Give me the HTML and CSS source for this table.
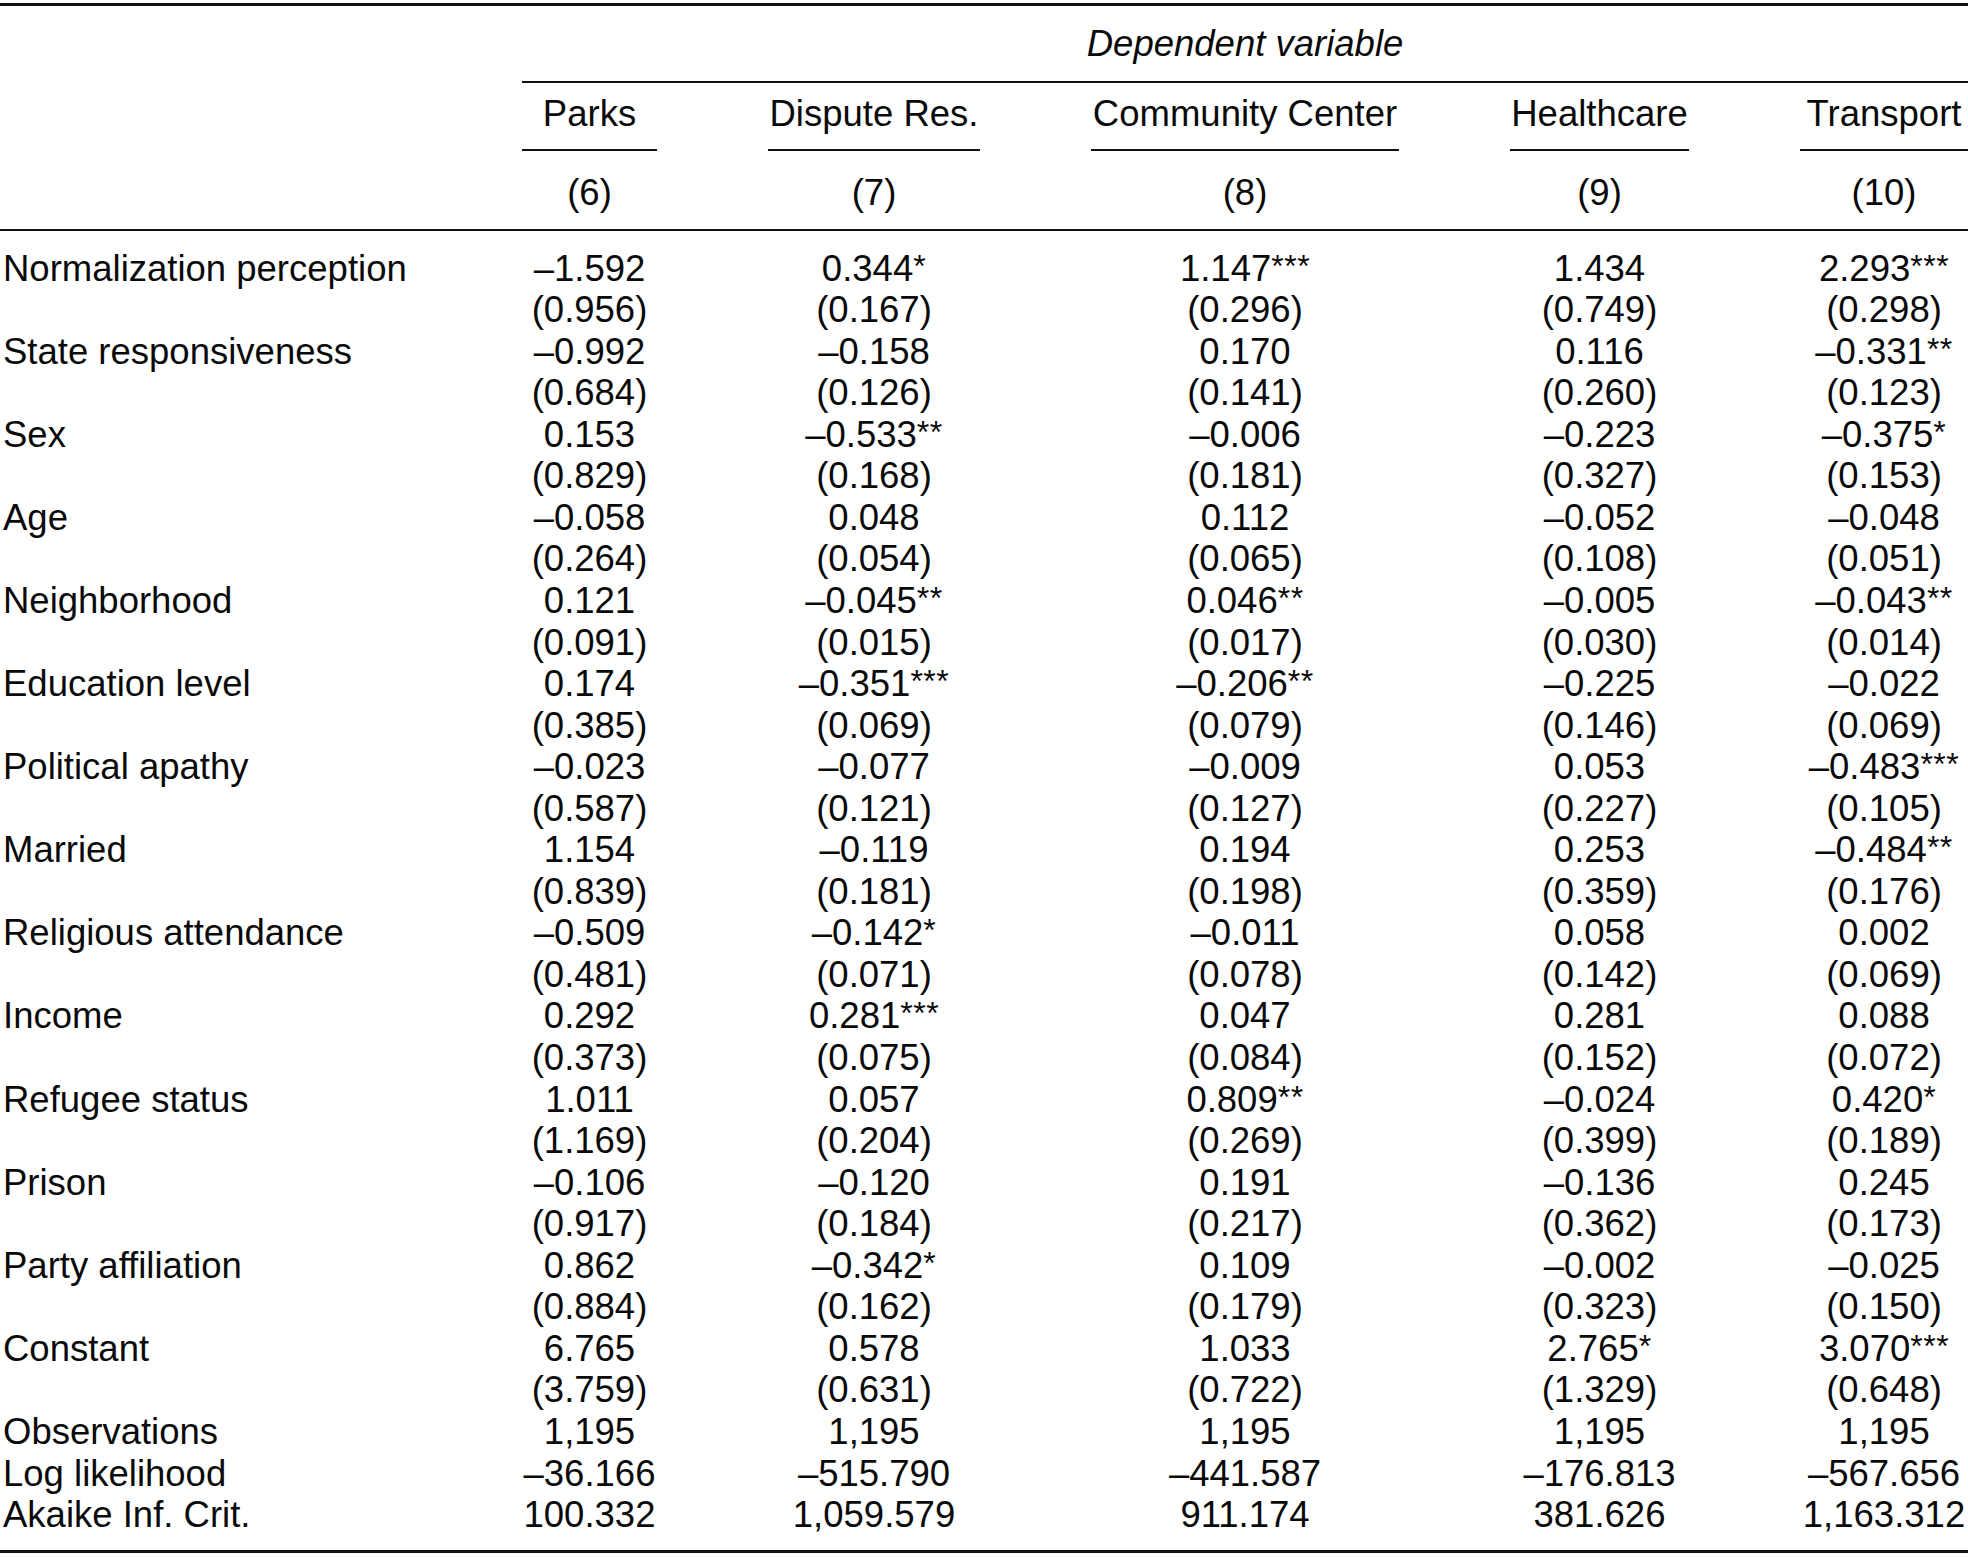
FILE: index.html
```html
<!DOCTYPE html>
<html lang="en">
<head>
<meta charset="utf-8">
<title>Regression table</title>
<link rel="stylesheet" href="styles.css">
</head>
<body>
<table class="reg">
  <colgroup>
    <col class="c-label">
    <col class="c-parks">
    <col class="c-dispute">
    <col class="c-cc">
    <col class="c-health">
    <col class="c-trans">
  </colgroup>
  <thead>
    <tr class="row-dep">
      <th class="lab"></th>
      <th class="dep" colspan="5"><div class="dep-in">Dependent variable</div></th>
    </tr>
    <tr class="row-names">
      <th class="lab"></th>
      <th class="num"><div class="uline">Parks</div></th>
      <th class="num"><div class="uline">Dispute Res.</div></th>
      <th class="num"><div class="uline">Community Center</div></th>
      <th class="num"><div class="uline">Healthcare</div></th>
      <th class="num last"><div class="uline">Transport</div></th>
    </tr>
    <tr class="row-idx">
      <th class="lab"></th>
      <th class="num">(6)</th>
      <th class="num">(7)</th>
      <th class="num">(8)</th>
      <th class="num">(9)</th>
      <th class="num last">(10)</th>
    </tr>
  </thead>
  <tbody>
    <tr class="first"><td class="lab">Normalization perception</td><td class="num">–1.592</td><td class="num">0.344<span class="st">*</span></td><td class="num">1.147<span class="st">***</span></td><td class="num">1.434</td><td class="num last">2.293<span class="st">***</span></td></tr>
    <tr><td class="lab"></td><td class="num">(0.956)</td><td class="num">(0.167)</td><td class="num">(0.296)</td><td class="num">(0.749)</td><td class="num last">(0.298)</td></tr>
    <tr><td class="lab">State responsiveness</td><td class="num">–0.992</td><td class="num">–0.158</td><td class="num">0.170</td><td class="num">0.116</td><td class="num last">–0.331<span class="st">**</span></td></tr>
    <tr><td class="lab"></td><td class="num">(0.684)</td><td class="num">(0.126)</td><td class="num">(0.141)</td><td class="num">(0.260)</td><td class="num last">(0.123)</td></tr>
    <tr><td class="lab">Sex</td><td class="num">0.153</td><td class="num">–0.533<span class="st">**</span></td><td class="num">–0.006</td><td class="num">–0.223</td><td class="num last">–0.375<span class="st">*</span></td></tr>
    <tr><td class="lab"></td><td class="num">(0.829)</td><td class="num">(0.168)</td><td class="num">(0.181)</td><td class="num">(0.327)</td><td class="num last">(0.153)</td></tr>
    <tr><td class="lab">Age</td><td class="num">–0.058</td><td class="num">0.048</td><td class="num">0.112</td><td class="num">–0.052</td><td class="num last">–0.048</td></tr>
    <tr><td class="lab"></td><td class="num">(0.264)</td><td class="num">(0.054)</td><td class="num">(0.065)</td><td class="num">(0.108)</td><td class="num last">(0.051)</td></tr>
    <tr><td class="lab">Neighborhood</td><td class="num">0.121</td><td class="num">–0.045<span class="st">**</span></td><td class="num">0.046<span class="st">**</span></td><td class="num">–0.005</td><td class="num last">–0.043<span class="st">**</span></td></tr>
    <tr><td class="lab"></td><td class="num">(0.091)</td><td class="num">(0.015)</td><td class="num">(0.017)</td><td class="num">(0.030)</td><td class="num last">(0.014)</td></tr>
    <tr><td class="lab">Education level</td><td class="num">0.174</td><td class="num">–0.351<span class="st">***</span></td><td class="num">–0.206<span class="st">**</span></td><td class="num">–0.225</td><td class="num last">–0.022</td></tr>
    <tr><td class="lab"></td><td class="num">(0.385)</td><td class="num">(0.069)</td><td class="num">(0.079)</td><td class="num">(0.146)</td><td class="num last">(0.069)</td></tr>
    <tr><td class="lab">Political apathy</td><td class="num">–0.023</td><td class="num">–0.077</td><td class="num">–0.009</td><td class="num">0.053</td><td class="num last">–0.483<span class="st">***</span></td></tr>
    <tr><td class="lab"></td><td class="num">(0.587)</td><td class="num">(0.121)</td><td class="num">(0.127)</td><td class="num">(0.227)</td><td class="num last">(0.105)</td></tr>
    <tr><td class="lab">Married</td><td class="num">1.154</td><td class="num">–0.119</td><td class="num">0.194</td><td class="num">0.253</td><td class="num last">–0.484<span class="st">**</span></td></tr>
    <tr><td class="lab"></td><td class="num">(0.839)</td><td class="num">(0.181)</td><td class="num">(0.198)</td><td class="num">(0.359)</td><td class="num last">(0.176)</td></tr>
    <tr><td class="lab">Religious attendance</td><td class="num">–0.509</td><td class="num">–0.142<span class="st">*</span></td><td class="num">–0.011</td><td class="num">0.058</td><td class="num last">0.002</td></tr>
    <tr><td class="lab"></td><td class="num">(0.481)</td><td class="num">(0.071)</td><td class="num">(0.078)</td><td class="num">(0.142)</td><td class="num last">(0.069)</td></tr>
    <tr><td class="lab">Income</td><td class="num">0.292</td><td class="num">0.281<span class="st">***</span></td><td class="num">0.047</td><td class="num">0.281</td><td class="num last">0.088</td></tr>
    <tr><td class="lab"></td><td class="num">(0.373)</td><td class="num">(0.075)</td><td class="num">(0.084)</td><td class="num">(0.152)</td><td class="num last">(0.072)</td></tr>
    <tr><td class="lab">Refugee status</td><td class="num">1.011</td><td class="num">0.057</td><td class="num">0.809<span class="st">**</span></td><td class="num">–0.024</td><td class="num last">0.420<span class="st">*</span></td></tr>
    <tr><td class="lab"></td><td class="num">(1.169)</td><td class="num">(0.204)</td><td class="num">(0.269)</td><td class="num">(0.399)</td><td class="num last">(0.189)</td></tr>
    <tr><td class="lab">Prison</td><td class="num">–0.106</td><td class="num">–0.120</td><td class="num">0.191</td><td class="num">–0.136</td><td class="num last">0.245</td></tr>
    <tr><td class="lab"></td><td class="num">(0.917)</td><td class="num">(0.184)</td><td class="num">(0.217)</td><td class="num">(0.362)</td><td class="num last">(0.173)</td></tr>
    <tr><td class="lab">Party affiliation</td><td class="num">0.862</td><td class="num">–0.342<span class="st">*</span></td><td class="num">0.109</td><td class="num">–0.002</td><td class="num last">–0.025</td></tr>
    <tr><td class="lab"></td><td class="num">(0.884)</td><td class="num">(0.162)</td><td class="num">(0.179)</td><td class="num">(0.323)</td><td class="num last">(0.150)</td></tr>
    <tr><td class="lab">Constant</td><td class="num">6.765</td><td class="num">0.578</td><td class="num">1.033</td><td class="num">2.765<span class="st">*</span></td><td class="num last">3.070<span class="st">***</span></td></tr>
    <tr><td class="lab"></td><td class="num">(3.759)</td><td class="num">(0.631)</td><td class="num">(0.722)</td><td class="num">(1.329)</td><td class="num last">(0.648)</td></tr>
    <tr><td class="lab">Observations</td><td class="num">1,195</td><td class="num">1,195</td><td class="num">1,195</td><td class="num">1,195</td><td class="num last">1,195</td></tr>
    <tr><td class="lab">Log likelihood</td><td class="num">–36.166</td><td class="num">–515.790</td><td class="num">–441.587</td><td class="num">–176.813</td><td class="num last">–567.656</td></tr>
    <tr class="final"><td class="lab">Akaike Inf. Crit.</td><td class="num">100.332</td><td class="num">1,059.579</td><td class="num">911.174</td><td class="num">381.626</td><td class="num last">1,163.312</td></tr>
  </tbody>
</table>
</body>
</html>
```

FILE: styles.css
```css
html, body {
  margin: 0;
  padding: 0;
  background: #ffffff;
}

body {
  font-family: "Liberation Sans", Arial, Helvetica, sans-serif;
  font-size: 36.5px;
  line-height: 41.55px;
  color: #0a0a0a;
}

.reg {
  width: 1968px;
  table-layout: fixed;
  border-collapse: collapse;
  border-spacing: 0;
  margin-top: 3px;
  border-top: 3px solid #111;
  border-bottom: 3px solid #111;
}

.c-label { width: 466.5px; }
.c-parks { width: 246px; }
.c-dispute { width: 323px; }
.c-cc { width: 419px; }
.c-health { width: 290px; }
.c-trans { width: 223.5px; }

.reg th,
.reg td {
  font-weight: normal;
  padding: 0;
  vertical-align: top;
  white-space: nowrap;
}

.reg .lab {
  text-align: left;
  padding-left: 3px;
}

.reg .num {
  text-align: center;
  padding-left: 55.5px;
  padding-right: 55.5px;
}

.reg .num.last {
  padding-right: 0;
}

/* significance stars, set as superscript */
.st {
  font-size: 32px;
  line-height: 0;
  vertical-align: 4px;
  letter-spacing: 0.5px;
}

/* Dependent variable banner */
.row-dep .dep {
  padding: 17px 0 0 55.5px;
  text-align: center;
  font-style: italic;
}

.dep-in {
  padding-bottom: 16.5px;
  border-bottom: 2px solid #111;
}

/* Column names with short underlines */
.row-names th {
  padding-top: 10px;
}

.uline {
  padding-bottom: 14.5px;
  border-bottom: 2px solid #111;
}

/* Model numbers */
.row-idx th {
  padding-top: 21px;
  padding-bottom: 15.5px;
  border-bottom: 2.5px solid #111;
}

.reg tbody tr.first td {
  padding-top: 16.5px;
}

.reg tbody tr.final td {
  padding-bottom: 14.5px;
}
```
